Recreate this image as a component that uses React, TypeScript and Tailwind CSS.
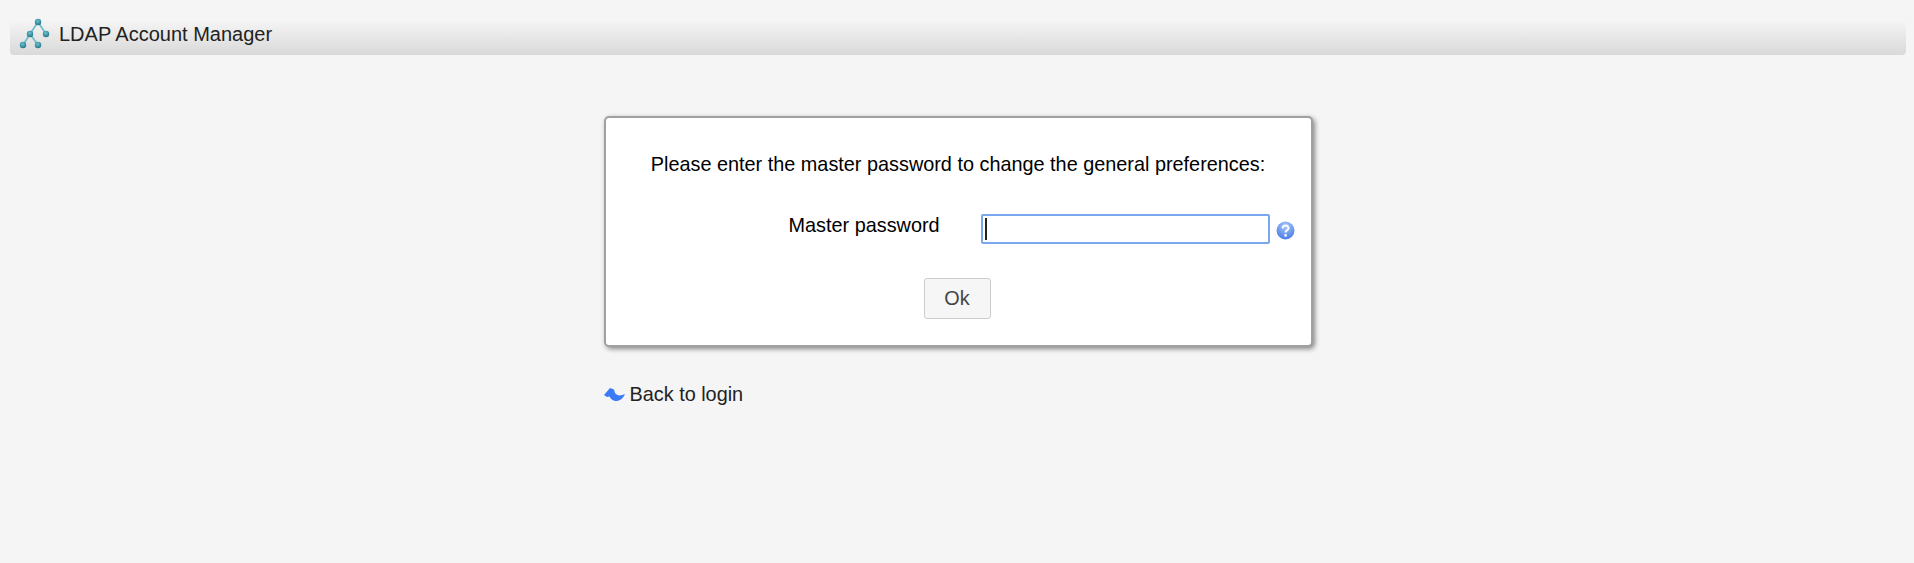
const font = "font-['Liberation_Sans',Arial,sans-serif]";

const TreeIcon = () => (
  <svg width="32" height="32" viewBox="0 0 32 32" className="mb-[7px] shrink-0">
    <defs>
      <radialGradient id="node" cx="45%" cy="35%" r="70%">
        <stop offset="0%" stopColor="#6cc3d2" />
        <stop offset="100%" stopColor="#1f6f80" />
      </radialGradient>
    </defs>
    <g stroke="#74bccb" strokeWidth="1.8" fill="none">
      <path d="M20 4 L12 16 L5 27" />
      <path d="M20 4 L28 16" />
      <path d="M12 16 L20 27" />
    </g>
    <g fill="url(#node)">
      <circle cx="20" cy="4" r="3.2" />
      <circle cx="12" cy="16" r="3.2" />
      <circle cx="28" cy="16" r="3.2" />
      <circle cx="5" cy="27" r="3.2" />
      <circle cx="20" cy="27" r="3.2" />
    </g>
  </svg>
);

const HelpIcon = () => (
  <svg width="19" height="19" viewBox="0 0 19 19" className="shrink-0">
    <defs>
      <radialGradient id="help" cx="50%" cy="25%" r="80%">
        <stop offset="0%" stopColor="#a9c6f8" />
        <stop offset="100%" stopColor="#4178e6" />
      </radialGradient>
    </defs>
    <circle cx="9.5" cy="9.5" r="9" fill="url(#help)" />
    <path d="M6.6 7.4 C6.8 3.6 12.6 3.8 12.5 7.2 C12.4 9.2 9.6 9.2 9.6 11.4" fill="none" stroke="#fff" strokeWidth="2" />
    <circle cx="9.6" cy="14.4" r="1.3" fill="#fff" />
  </svg>
);

const BackIcon = () => (
  <svg width="22" height="16" viewBox="0 0 22 16" className="shrink-0">
    <path
      d="M0 9 L6 2 L10 3.5 L11 7 C13 10 17 10 21 8 C19 13 15 15.5 11 15 C8 14.5 6.5 12.5 5.5 10.5 L3 11 Z"
      fill="#3b7bf5"
    />
  </svg>
);

export default function App() {
  return (
    <div className={`${font} min-h-[563px] bg-[#f5f5f5] pl-[10px] pr-[8px] pt-[20px] text-[#222]`}>
      <div className="flex h-[35px] items-center gap-[9px] rounded-b-[4px] bg-gradient-to-b from-[#f5f5f5] to-[#d9d9d9] pl-[8px] text-[20px]">
        <TreeIcon />
        <span className="mb-[8px]">LDAP Account Manager</span>
      </div>

      <div className="mx-auto mt-[61px] w-[709px]">
        <div className="h-[231px] rounded-[5px] border-2 border-[#a0a0a2] bg-white pt-[34px] shadow-[2px_2px_5px_#888]">
          <p className="text-center text-[19.85px] leading-[24px] text-black">
            Please enter the master password to change the general preferences:
          </p>
          <div className="mt-[38px] flex items-start">
            <label className="ml-[183px] w-[191px] -translate-y-px text-[19.85px] leading-[24px] text-black">Master password</label>
            <div className="ml-[1px] h-[30px] w-[289px] rounded-[2px] border-2 border-[#7aa7ee] bg-white p-[2px]">
              <div className="h-[22px] w-[2px] bg-[#222]" />
            </div>
            <div className="ml-[6px] mt-[7px]">
              <HelpIcon />
            </div>
          </div>
          <div className="mt-[34px] flex justify-center">
            <button className="mr-[2px] h-[41px] w-[67px] rounded-[3px] border border-[#cccccc] bg-[#f6f6f6] text-[19.85px] text-[#454545]">
              Ok
            </button>
          </div>
        </div>

        <a className="mt-[35px] flex items-center gap-[4px] text-[19.85px] leading-[24px] text-[#222]">
          <BackIcon />
          <span>Back to login</span>
        </a>
      </div>
    </div>
  );
}
